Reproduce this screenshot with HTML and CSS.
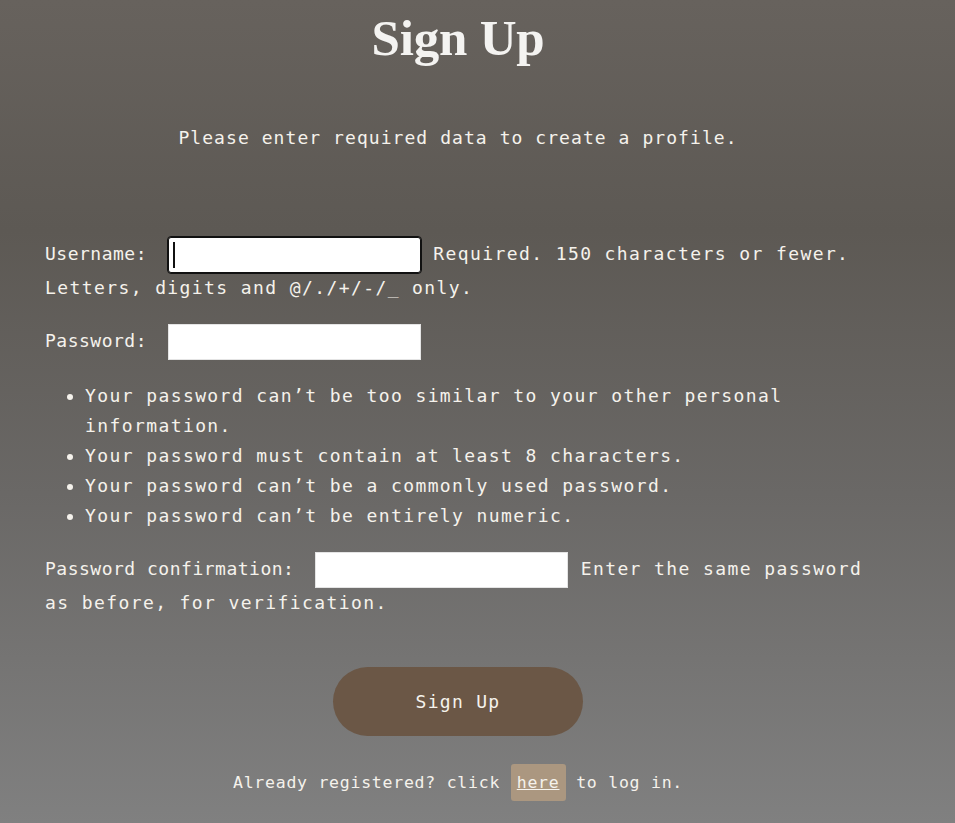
FILE: index.html
```html
<!DOCTYPE html>
<html lang="en">
<head>
<meta charset="utf-8">
<title>Sign Up</title>
<link rel="stylesheet" href="styles.css">
</head>
<body>
<main class="page">
  <h1 class="title">Sign Up</h1>
  <p class="intro">Please enter required data to create a profile.</p>
  <form class="form">
    <p class="field"><label class="label">Username:</label><span class="input-wrap"><input class="input input--focus" type="text"><span class="caret"></span></span> <span class="help">Required. 150 characters or fewer.</span> <span class="help">Letters, digits and @/./+/-/_ only.</span></p>
    <p class="field"><label class="label">Password:</label><input class="input" type="password"></p>
    <ul class="rules">
      <li>Your password can’t be too similar to your other personal information.</li>
      <li>Your password must contain at least 8 characters.</li>
      <li>Your password can’t be a commonly used password.</li>
      <li>Your password can’t be entirely numeric.</li>
    </ul>
    <p class="field"><label class="label">Password confirmation:</label><input class="input" type="password"> <span class="help">Enter the same password</span> <span class="help">as before, for verification.</span></p>
    <div class="actions"><button class="btn" type="button">Sign Up</button></div>
  </form>
  <p class="footer">Already registered? click <a class="link" href="#">here</a> to log in.</p>
</main>
</body>
</html>
```
FILE: styles.css
```css
html, body {
  margin: 0;
  padding: 0;
}
body {
  min-height: 823px;
  background: linear-gradient(to bottom, #67625d 0%, #5d5954 28%, #6a6866 60%, #808080 100%);
  color: #f5f2ec;
  font-family: "DejaVu Sans Mono", "Liberation Mono", monospace;
  font-size: 18px;
  letter-spacing: 1.4px;
  line-height: 30px;
}
.page {
  width: 826px;
  padding: 0 84px 1px 45px;
}
.title {
  margin: 8px 0 0;
  text-align: center;
  font-family: "Liberation Serif", "DejaVu Serif", serif;
  font-weight: 700;
  font-size: 51px;
  line-height: 60px;
  letter-spacing: -0.2px;
  color: #f4f3f1;
}
.intro {
  margin: 55px 0 0;
  text-align: center;
  letter-spacing: 1.06px;
}
.form {
  margin-top: 84px;
  display: flex;
  flex-direction: column;
  gap: 21px;
}
.field {
  margin: 0;
}
.label {
  letter-spacing: 0.5px;
  margin-right: 21px;
}
.input-wrap {
  position: relative;
  display: inline-block;
  vertical-align: middle;
}
.input {
  box-sizing: border-box;
  width: 253px;
  height: 36px;
  padding: 0;
  margin: 0;
  border: 1px solid #e4e4e4;
  background: #fff;
  vertical-align: middle;
  font: inherit;
}
.input--focus {
  display: block;
  border: 1px solid #111;
  outline: 1px solid #111;
  border-radius: 3px;
  box-shadow: inset 0 0 0 1px #fff;
}
.caret {
  position: absolute;
  left: 5px;
  top: 5px;
  width: 1.5px;
  height: 26px;
  background: #111;
}
.rules {
  margin: 0;
  padding-left: 40px;
}
.actions {
  margin-top: 28px;
  display: flex;
  justify-content: center;
}
.btn {
  width: 250px;
  height: 69px;
  border: none;
  border-radius: 35px;
  background: #6b5746;
  color: #f5f2ec;
  font: inherit;
  letter-spacing: 1.3px;
  cursor: pointer;
}
.footer {
  margin: 32px 0 0;
  text-align: center;
  font-size: 16.5px;
  letter-spacing: 0.75px;
}
.link {
  color: #f5f2ec;
  background: #ab9780;
  padding: 9px 6px;
  border-radius: 3px;
  text-decoration: underline;
}
```
